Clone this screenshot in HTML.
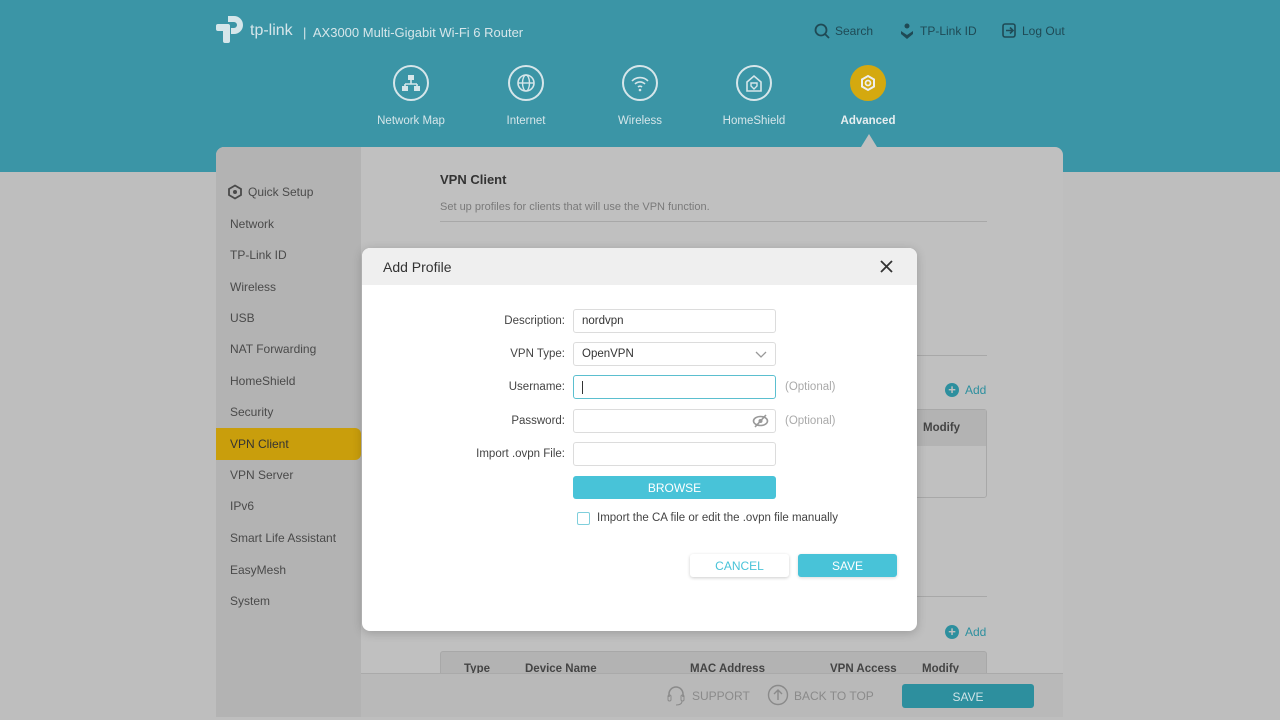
<!DOCTYPE html>
<html><head><meta charset="utf-8"><style>
*{box-sizing:border-box;margin:0;padding:0}
body{width:1280px;height:720px;overflow:hidden;background:#bebebe;font-family:"Liberation Sans",sans-serif;position:relative}
.hdr{position:absolute;left:0;top:0;width:1280px;height:172px;background:#3b95a6}
.abs{position:absolute}
.navi{position:absolute;top:65px;width:100px;text-align:center;color:#d6e6ea;font-size:11.5px}
.navi .c{width:36px;height:36px;border:2px solid #d6e6ea;border-radius:50%;margin:0 auto 14px;display:flex;align-items:center;justify-content:center}
.card{position:absolute;left:216px;top:147px;width:847px;height:570px;background:#c0c0c0;border-radius:8px 8px 0 0;overflow:hidden}
.side{position:absolute;left:0;top:0;width:145px;height:570px;background:#b3b3b3}
.side div{position:absolute;left:14px;font-size:12px;color:#4a4a4a}
.modal{position:absolute;left:362px;top:248px;width:555px;height:383px;background:#fff;border-radius:8px;overflow:hidden;box-shadow:0 2px 10px rgba(0,0,0,.2)}
.mh{height:37px;background:#efefef;font-size:14px;color:#333;padding:11px 0 0 21px}
.lbl{position:absolute;right:352px;font-size:11.5px;color:#444;text-align:right}
.inp{position:absolute;left:211px;width:203px;height:24px;border:1px solid #dcdcdc;border-radius:3px;font-size:11.5px;color:#333;padding:5px 8px}
.opt{position:absolute;left:423px;font-size:11.5px;color:#aaa}
.btn{position:absolute;border-radius:3px;font-size:12px;text-align:center}
</style></head><body>
<div class="hdr">
 <svg class="abs" style="left:216px;top:14px" width="32" height="30" viewBox="0 0 32 30"><path d="M12 2 h6 a9 9 0 0 1 0 18 h-3 v-6 h3 a3 3 0 0 0 0 -6 h-6 z" fill="#d6e6ea"/><rect x="0" y="10" width="11" height="7" rx="2" fill="#d6e6ea"/><rect x="7" y="10" width="7" height="19" rx="2" fill="#d6e6ea"/></svg>
 <div class="abs" style="left:250px;top:22px;font-size:16px;color:#d6e6ea">tp-link</div>
 <div class="abs" style="left:303px;top:25px;font-size:13px;color:#d6e6ea">|&nbsp; AX3000 Multi-Gigabit Wi-Fi 6 Router</div>
 <svg class="abs" style="left:814px;top:23px" width="16" height="16"><circle cx="7" cy="7" r="5.5" stroke="#1f4a55" stroke-width="1.8" fill="none"/><line x1="11" y1="11" x2="15" y2="15" stroke="#1f4a55" stroke-width="1.8"/></svg>
 <div class="abs" style="left:835px;top:24px;font-size:12px;color:#1f4a55">Search</div>
 <svg class="abs" style="left:900px;top:22px" width="14" height="18"><circle cx="7" cy="4" r="2.5" fill="#1f4a55"/><path d="M1 9 l6 4 6-4 v3 l-6 5 -6-5z" fill="#1f4a55"/></svg>
 <div class="abs" style="left:920px;top:24px;font-size:12px;color:#1f4a55">TP-Link ID</div>
 <svg class="abs" style="left:1002px;top:23px" width="15" height="15"><rect x="1" y="1" width="12" height="13" rx="2" stroke="#1f4a55" stroke-width="1.6" fill="none"/><path d="M4 7.5 h7 M8 4.5 l3 3 -3 3" stroke="#1f4a55" stroke-width="1.6" fill="none"/></svg>
 <div class="abs" style="left:1022px;top:24px;font-size:12px;color:#1f4a55">Log Out</div>
 <div class="navi" style="left:361px"><div class="c"><svg width="20" height="20"><rect x="7" y="2" width="6" height="5" fill="#d6e6ea"/><path d="M10 7v4 M4 11h12 M4 11v2 M16 11v2" stroke="#d6e6ea" stroke-width="1.6"/><rect x="1" y="13" width="6" height="5" fill="#d6e6ea"/><rect x="13" y="13" width="6" height="5" fill="#d6e6ea"/></svg></div>Network Map</div>
 <div class="navi" style="left:476px"><div class="c"><svg width="20" height="20"><circle cx="10" cy="10" r="8" stroke="#d6e6ea" stroke-width="1.6" fill="none"/><ellipse cx="10" cy="10" rx="3.5" ry="8" stroke="#d6e6ea" stroke-width="1.4" fill="none"/><path d="M2 10h16" stroke="#d6e6ea" stroke-width="1.4"/></svg></div>Internet</div>
 <div class="navi" style="left:590px"><div class="c"><svg width="20" height="20"><path d="M2 8 a11 11 0 0 1 16 0 M5 11 a7 7 0 0 1 10 0 M8 14 a3 3 0 0 1 4 0" stroke="#d6e6ea" stroke-width="1.6" fill="none"/><circle cx="10" cy="17" r="1.3" fill="#d6e6ea"/></svg></div>Wireless</div>
 <div class="navi" style="left:704px"><div class="c"><svg width="20" height="20"><path d="M3 9 L10 3 17 9 V18 H3Z" stroke="#d6e6ea" stroke-width="1.6" fill="none"/><path d="M7 10 h6 v3 l-3 3 -3-3z" stroke="#d6e6ea" stroke-width="1.4" fill="none"/></svg></div>HomeShield</div>
 <div class="navi" style="left:818px;font-weight:bold;color:#e6eef0"><div class="c" style="background:#d4a90f;border-color:#d4a90f"><svg width="20" height="20"><path d="M10 3 L16 6.5 V13.5 L10 17 4 13.5 V6.5Z" stroke="#eee" stroke-width="2" fill="none"/><circle cx="10" cy="10" r="2.5" stroke="#eee" stroke-width="1.8" fill="none"/></svg></div>Advanced</div>
 <div class="abs" style="left:861px;top:134px;width:0;height:0;border-left:8px solid transparent;border-right:8px solid transparent;border-bottom:13px solid #c0c0c0"></div>
</div>
<div class="card">
 <div class="side">
  <svg class="abs" style="left:11px;top:37px" width="16" height="16"><path d="M8 1.5 L14 5 V11 L8 14.5 2 11 V5Z" stroke="#4a4a4a" stroke-width="1.8" fill="none"/><circle cx="8" cy="8" r="2" fill="#4a4a4a"/></svg>
  <div style="left:32px;top:38px">Quick Setup</div>
  <div style="top:70px">Network</div>
  <div style="top:101px">TP-Link ID</div>
  <div style="top:133px">Wireless</div>
  <div style="top:164px">USB</div>
  <div style="top:195px">NAT Forwarding</div>
  <div style="top:227px">HomeShield</div>
  <div style="top:258px">Security</div>
  <div style="left:0;top:281px;width:145px;height:32px;background:#c99e0c;border-radius:0 6px 6px 0"></div>
  <div style="top:290px;color:#333">VPN Client</div>
  <div style="top:321px">VPN Server</div>
  <div style="top:352px">IPv6</div>
  <div style="top:384px">Smart Life Assistant</div>
  <div style="top:416px">EasyMesh</div>
  <div style="top:447px">System</div>
 </div>
 <div class="abs" style="left:224px;top:25px;font-size:13px;font-weight:bold;color:#333">VPN Client</div>
 <div class="abs" style="left:224px;top:54px;font-size:11px;color:#7a7a7a">Set up profiles for clients that will use the VPN function.</div>
 <div class="abs" style="left:224px;top:74px;width:547px;height:1px;background:#a8a8a8"></div>
 <div class="abs" style="left:700px;top:208px;width:71px;height:1px;background:#a8a8a8"></div>
 <div class="abs" style="left:729px;top:236px;width:14px;height:14px;border-radius:50%;background:#2d8f9e;color:#c0c0c0;font-size:13px;line-height:14px;text-align:center;font-weight:bold">+</div>
 <div class="abs" style="left:749px;top:236px;font-size:12px;color:#2d8f9e">Add</div>
 <div class="abs" style="left:690px;top:262px;width:81px;height:89px;border:1px solid #a8a8a8;border-radius:3px"><div style="height:36px;background:#b3b3b3;padding:12px 0 0 16px;font-size:11.5px;font-weight:bold;color:#444">Modify</div></div>
 <div class="abs" style="left:700px;top:449px;width:71px;height:1px;background:#a8a8a8"></div>
 <div class="abs" style="left:729px;top:478px;width:14px;height:14px;border-radius:50%;background:#2d8f9e;color:#c0c0c0;font-size:13px;line-height:14px;text-align:center;font-weight:bold">+</div>
 <div class="abs" style="left:749px;top:478px;font-size:12px;color:#2d8f9e">Add</div>
 <div class="abs" style="left:224px;top:504px;width:547px;height:30px;background:#b3b3b3;border:1px solid #a8a8a8;border-radius:3px;font-size:11.5px;font-weight:bold;color:#444">
  <span class="abs" style="left:23px;top:11px">Type</span><span class="abs" style="left:84px;top:11px">Device Name</span><span class="abs" style="left:249px;top:11px">MAC Address</span><span class="abs" style="left:389px;top:11px">VPN Access</span><span class="abs" style="left:481px;top:11px">Modify</span></div>
 <div class="abs" style="left:145px;top:526px;width:702px;height:44px;background:#b9b9b9;border-top:1px solid #aaa"></div>
 <svg class="abs" style="left:449px;top:538px" width="22" height="22"><path d="M4 12 V9 a7 7 0 0 1 14 0 V12" stroke="#8a8a8a" stroke-width="1.5" fill="none"/><rect x="3" y="10" width="3" height="6" rx="1.5" stroke="#8a8a8a" fill="none"/><rect x="16" y="10" width="3" height="6" rx="1.5" stroke="#8a8a8a" fill="none"/><path d="M17 16 q0 4 -6 4" stroke="#8a8a8a" fill="none"/></svg>
 <div class="abs" style="left:476px;top:542px;font-size:12px;color:#8a8a8a">SUPPORT</div>
 <svg class="abs" style="left:551px;top:537px" width="22" height="22"><circle cx="11" cy="11" r="9.5" stroke="#8a8a8a" stroke-width="1.4" fill="none"/><path d="M11 16 V6 M7 10 l4-4 4 4" stroke="#8a8a8a" stroke-width="1.4" fill="none"/></svg>
 <div class="abs" style="left:578px;top:542px;font-size:12px;color:#8a8a8a">BACK TO TOP</div>
 <div class="btn" style="left:686px;top:537px;width:132px;height:24px;background:#2d8f9e;color:#cfe3e7;padding-top:6px">SAVE</div>
</div>
<div class="modal">
 <div class="mh">Add Profile</div>
 <svg class="abs" style="left:518px;top:12px" width="13" height="13"><path d="M1 1 L12 12 M12 1 L1 12" stroke="#333" stroke-width="1.8"/></svg>
 <div class="lbl" style="top:67px">Description:</div>
 <div class="inp" style="top:61px">nordvpn</div>
 <div class="lbl" style="top:100px">VPN Type:</div>
 <div class="inp" style="top:94px">OpenVPN<svg class="abs" style="right:8px;top:8px" width="12" height="8"><path d="M1 1 l5 5 5-5" stroke="#999" stroke-width="1.3" fill="none"/></svg></div>
 <div class="lbl" style="top:133px">Username:</div>
 <div class="inp" style="top:127px;border-color:#5bbfcf"><div style="width:1px;height:13px;background:#333;margin-top:0"></div></div>
 <div class="opt" style="top:133px">(Optional)</div>
 <div class="lbl" style="top:167px">Password:</div>
 <div class="inp" style="top:161px"><svg class="abs" style="right:6px;top:4px" width="17" height="14"><ellipse cx="8.5" cy="7" rx="7" ry="4.5" stroke="#999" stroke-width="1.6" fill="none"/><circle cx="8.5" cy="7" r="2" fill="#999"/><path d="M14 1 L3 13" stroke="#999" stroke-width="1.6"/></svg></div>
 <div class="opt" style="top:167px">(Optional)</div>
 <div class="lbl" style="top:200px">Import .ovpn File:</div>
 <div class="inp" style="top:194px"></div>
 <div class="btn" style="left:211px;top:228px;width:203px;height:23px;background:#48c3d8;color:#fff;padding-top:5px">BROWSE</div>
 <div class="abs" style="left:215px;top:264px;width:13px;height:13px;border:1px solid #7fcfdc;border-radius:2px"></div>
 <div class="abs" style="left:235px;top:264px;font-size:11.5px;color:#444">Import the CA file or edit the .ovpn file manually</div>
 <div class="btn" style="left:328px;top:306px;width:99px;height:23px;background:#fff;color:#48c3d8;padding-top:5px;box-shadow:0 1px 3px rgba(0,0,0,.2)">CANCEL</div>
 <div class="btn" style="left:436px;top:306px;width:99px;height:23px;background:#48c3d8;color:#fff;padding-top:5px;box-shadow:0 1px 3px rgba(0,0,0,.15)">SAVE</div>
</div>
</body></html>
